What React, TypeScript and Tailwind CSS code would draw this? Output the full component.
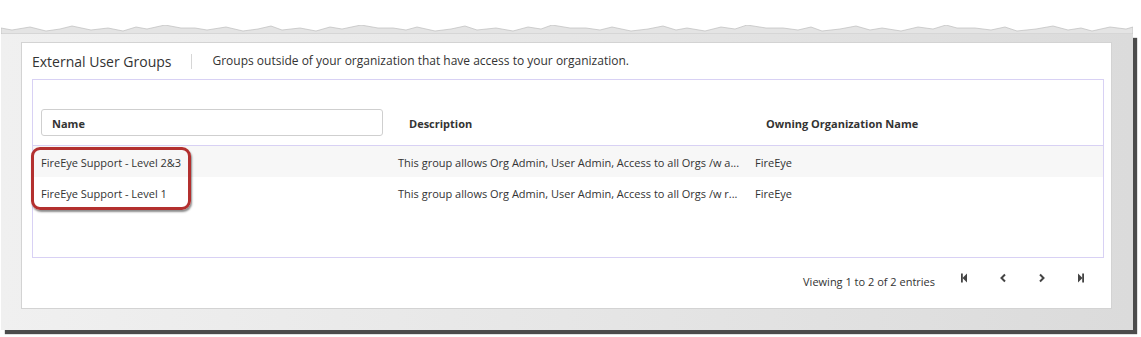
import React from "react";

const rows = [
  {
    name: "FireEye Support - Level 2&3",
    description: "This group allows Org Admin, User Admin, Access to all Orgs /w a...",
    owner: "FireEye",
  },
  {
    name: "FireEye Support - Level 1",
    description: "This group allows Org Admin, User Admin, Access to all Orgs /w r...",
    owner: "FireEye",
  },
];

// jagged top edge of the clipped screenshot
const tornPoints = (() => {
  const pts: string[] = ["0,9"];
  let x = 0;
  let i = 0;
  while (x < 1132) {
    const y = [3, 5, 2, 6, 4, 1, 5, 3, 6, 2, 4, 0, 3][i % 13];
    pts.push(`${x},${y}`);
    x += 11 + ((i * 7) % 9);
    i++;
  }
  pts.push("1132,2", "1132,9");
  return pts.join(" ");
})();

function PagerIcon({ kind }: { kind: "first" | "prev" | "next" | "last" }) {
  return (
    <svg width="8" height="10" viewBox="0 0 8 10" className="text-[#444]">
      {kind === "first" && (
        <>
          <rect x="1" y="0.5" width="1.8" height="9" fill="currentColor" />
          <path d="M7 0.5 L2.5 5 L7 9.5 Z" fill="currentColor" />
        </>
      )}
      {kind === "last" && (
        <>
          <rect x="5.2" y="0.5" width="1.8" height="9" fill="currentColor" />
          <path d="M1 0.5 L5.5 5 L1 9.5 Z" fill="currentColor" />
        </>
      )}
      {kind === "prev" && (
        <path d="M6 1.5 L2.5 5 L6 8.5" stroke="currentColor" strokeWidth="2" fill="none" />
      )}
      {kind === "next" && (
        <path d="M2 1.5 L5.5 5 L2 8.5" stroke="currentColor" strokeWidth="2" fill="none" />
      )}
    </svg>
  );
}

export default function App() {
  return (
    <div
      className="w-[1141px] h-[337px] bg-white pt-[25px] pl-[1px] text-[#333] overflow-hidden"
      style={{ fontFamily: '"Open Sans", "Noto Sans", sans-serif' }}
    >
      <div className="w-[1132px]">
        <svg width="1132" height="9" className="block">
          <polygon points={tornPoints} fill="#e4e4e4" stroke="#bdbdbd" strokeWidth="0.7" />
        </svg>
        <div className="h-[296px] pt-[8px] pl-[20px] bg-gradient-to-r from-[#f0f0f0] via-[#e6e6e6] to-[#dbdbdb] shadow-[4px_4px_1px_rgba(0,0,0,0.7)]">
          <div className="w-[1091px] h-[267px] bg-white border border-[#d3d3d3] flex flex-col">
            {/* header */}
            <div className="h-[36px] flex items-center pl-[10px]">
              <span className="text-[14px] text-[#333]">External User Groups</span>
              <span className="mx-[20px] w-px h-[15px] bg-[#d6d6d6]" />
              <span className="text-[12px] text-[#333]">
                Groups outside of your organization that have access to your organization.
              </span>
            </div>

            {/* table box */}
            <div className="relative mx-[10px] mr-[7px] h-[179px] border border-[#d8d1f4]">
              <div className="grid grid-cols-[357px_357px_1fr] pt-[29px] pb-[9px] border-b border-[#d8d1f4] items-center text-[11px] font-bold">
                <div className="pl-[8px]">
                  <div className="w-[342px] h-[27px] border border-[#cfcfcf] rounded-[3px] flex items-center pl-[10px] pt-[3px]">
                    Name
                  </div>
                </div>
                <div className="pl-[19px] pt-[3px]">Description</div>
                <div className="pl-[19px] pt-[3px]">Owning Organization Name</div>
              </div>
              {rows.map((r, i) => (
                <div
                  key={r.name}
                  className={`grid grid-cols-[357px_357px_1fr] h-[31px] items-center pt-[3px] text-[11px] ${
                    i === 0 ? "bg-[#f7f7f7]" : "bg-white"
                  }`}
                >
                  <div className="pl-[8px] whitespace-nowrap">{r.name}</div>
                  <div className="pl-[8px] whitespace-nowrap">{r.description}</div>
                  <div className="pl-[8px]">{r.owner}</div>
                </div>
              ))}
              {/* highlight annotation */}
              <div className="absolute left-[-2px] top-[67px] w-[160px] h-[63px] rounded-[9px] border-[3px] border-[#b3302f] shadow-[1px_2px_2px_rgba(0,0,0,0.45)]" />
            </div>

            {/* pagination */}
            <div className="flex-1 flex items-start justify-end pr-[26px] pt-[15px]">
              <span className="text-[11px] mr-[25px] mt-[1px] leading-[15px]">Viewing 1 to 2 of 2 entries</span>
              <div className="flex items-center gap-[31px]">
                <PagerIcon kind="first" />
                <PagerIcon kind="prev" />
                <PagerIcon kind="next" />
                <PagerIcon kind="last" />
              </div>
            </div>
          </div>
        </div>
      </div>
    </div>
  );
}
